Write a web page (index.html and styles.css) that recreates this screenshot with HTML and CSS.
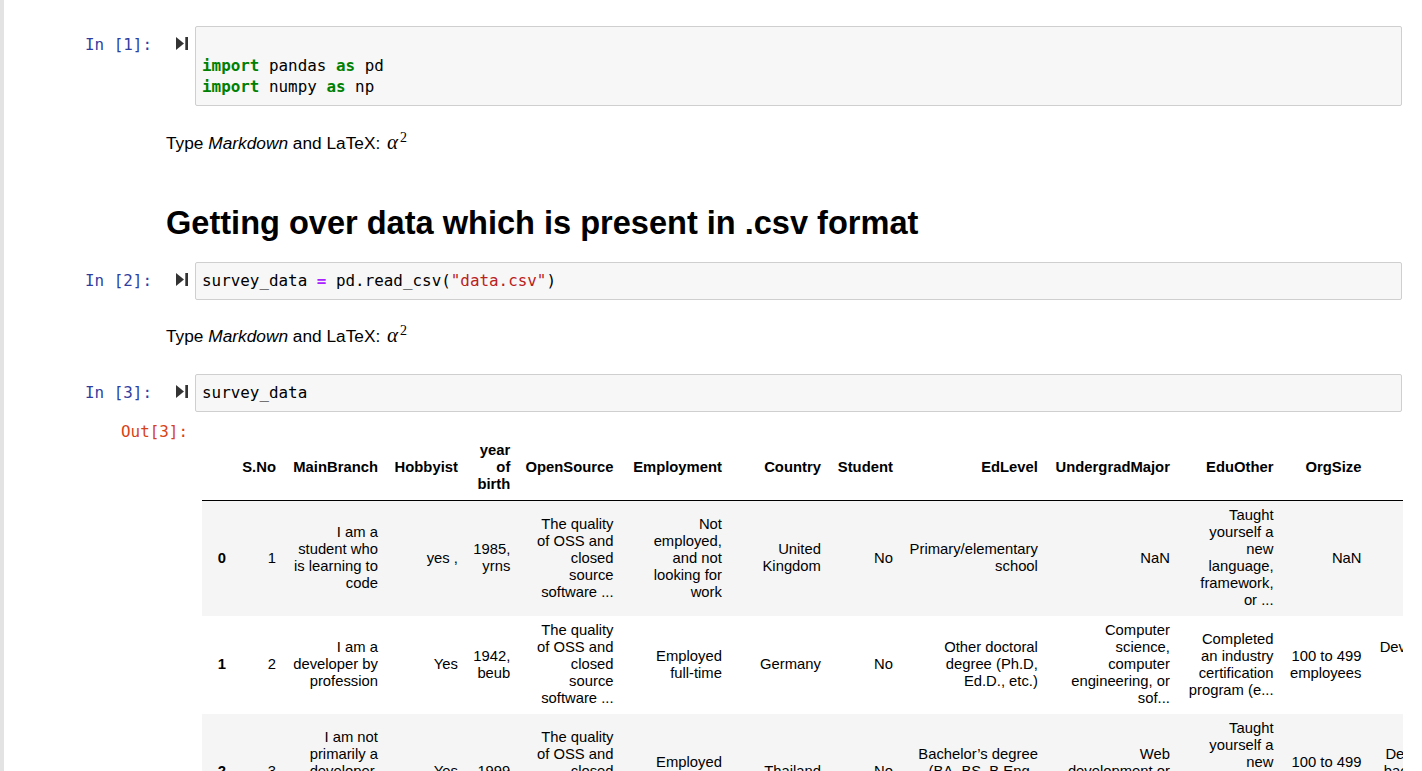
FILE: index.html
```html
<!DOCTYPE html>
<html lang="en">
<head>
<meta charset="utf-8">
<title>Notebook</title>
<link rel="stylesheet" href="styles.css">
</head>
<body>
<div class="site">
  <div class="notebook">

    <div class="code-cell cell-1">
      <div class="prompt prompt-in"><span>In [1]:</span><svg class="run" width="12" height="13" viewBox="0 0 12 13"><polygon points="0,0 8,6.5 0,13" fill="#333"/><rect x="9.3" y="0" width="2.7" height="13" fill="#333"/></svg></div>
      <div class="input-area">
        <div class="ln"></div>
        <div class="ln"><span class="kw">import</span> pandas <span class="kw">as</span> pd</div>
        <div class="ln"><span class="kw">import</span> numpy <span class="kw">as</span> np</div>
      </div>
    </div>

    <div class="md md-1">Type <em>Markdown</em> and LaTeX: <span class="math">α<sup>2</sup></span></div>

    <h1 class="md-h">Getting over data which is present in .csv format</h1>

    <div class="code-cell cell-2">
      <div class="prompt prompt-in"><span>In [2]:</span><svg class="run" width="12" height="13" viewBox="0 0 12 13"><polygon points="0,0 8,6.5 0,13" fill="#333"/><rect x="9.3" y="0" width="2.7" height="13" fill="#333"/></svg></div>
      <div class="input-area">
        <div class="ln">survey_data <span class="op">=</span> pd.read_csv(<span class="str">"data.csv"</span>)</div>
      </div>
    </div>

    <div class="md md-2">Type <em>Markdown</em> and LaTeX: <span class="math">α<sup>2</sup></span></div>

    <div class="code-cell cell-3">
      <div class="prompt prompt-in"><span>In [3]:</span><svg class="run" width="12" height="13" viewBox="0 0 12 13"><polygon points="0,0 8,6.5 0,13" fill="#333"/><rect x="9.3" y="0" width="2.7" height="13" fill="#333"/></svg></div>
      <div class="input-area">
        <div class="ln">survey_data</div>
      </div>
    </div>

    <div class="out-row">
      <div class="prompt prompt-out"><span>Out[3]:</span></div>
      <div class="output">
        <table class="df">
          <thead>
            <tr>
              <th class="w-idx"></th>
              <th class="w-sno">S.No</th>
              <th class="w-main">MainBranch</th>
              <th class="w-hob">Hobbyist</th>
              <th class="w-year">year of birth</th>
              <th class="w-open">OpenSource</th>
              <th class="w-emp">Employment</th>
              <th class="w-cty">Country</th>
              <th class="w-stu">Student</th>
              <th class="w-edl">EdLevel</th>
              <th class="w-ugm">UndergradMajor</th>
              <th class="w-edu">EduOther</th>
              <th class="w-org">OrgSize</th>
              <th class="w-dev">DevType</th>
            </tr>
          </thead>
          <tbody>
            <tr>
              <th>0</th>
              <td>1</td>
              <td>I am a student who is learning to code</td>
              <td>yes ,</td>
              <td>1985, yrns</td>
              <td>The quality of OSS and closed source software ...</td>
              <td>Not employed, and not looking for work</td>
              <td>United Kingdom</td>
              <td>No</td>
              <td>Primary/elementary school</td>
              <td>NaN</td>
              <td>Taught yourself a new language, framework, or ...</td>
              <td>NaN</td>
              <td>NaN</td>
            </tr>
            <tr>
              <th>1</th>
              <td>2</td>
              <td>I am a developer by profession</td>
              <td>Yes</td>
              <td>1942, beub</td>
              <td>The quality of OSS and closed source software ...</td>
              <td>Employed full-time</td>
              <td>Germany</td>
              <td>No</td>
              <td>Other doctoral degree (Ph.D, Ed.D., etc.)</td>
              <td>Computer science, computer engineering, or sof...</td>
              <td>Completed an industry certification program (e...</td>
              <td>100 to 499 employees</td>
              <td>Developer, desktop or enterprise applications;...</td>
            </tr>
            <tr>
              <th>2</th>
              <td>3</td>
              <td>I am not primarily a developer, but I write cod...</td>
              <td>Yes</td>
              <td>1999</td>
              <td>The quality of OSS and closed source software ...</td>
              <td>Employed full-time</td>
              <td>Thailand</td>
              <td>No</td>
              <td>Bachelor’s degree (BA, BS, B.Eng., etc.)</td>
              <td>Web development or web design</td>
              <td>Taught yourself a new language, framework, or ...</td>
              <td>100 to 499 employees</td>
              <td>Designer; Developer, back-end; Developer, front-end</td>
            </tr>
          </tbody>
        </table>
      </div>
    </div>

  </div>
</div>
</body>
</html>
```

FILE: styles.css
```css
html, body {
  margin: 0;
  height: 100%;
  overflow: hidden;
  background: #fff;
}

.site {
  height: 100%;
  overflow: hidden;
  box-sizing: border-box;
  border-left: 4px solid #e3e3e3;
}

.notebook {
  padding-top: 26px;
}

/* code cells */
.code-cell {
  display: flex;
}

.prompt {
  width: 191px;
  flex: none;
  box-sizing: border-box;
  padding-right: 7px;
  display: flex;
  justify-content: flex-end;
  align-items: flex-start;
  gap: 24px;
  font: 15.9px/21px "DejaVu Sans Mono", "Liberation Mono", monospace;
}

.prompt-in {
  color: #303F9F;
  padding-top: 8px;
}

.prompt-out {
  color: #D84315;
}

.run {
  margin-top: 3px;
  flex: none;
}

.input-area {
  flex: 1;
  min-width: 0;
  margin-right: 20px;
  background: #f7f7f7;
  border: 1px solid #cfcfcf;
  border-radius: 2px;
  padding: 7px 6px 8px;
  font: 15.9px/21px "DejaVu Sans Mono", "Liberation Mono", monospace;
  color: #000;
}

.ln {
  height: 21px;
  white-space: pre;
}

.kw {
  color: #008000;
  font-weight: bold;
}

.op {
  color: #AA22FF;
  font-weight: bold;
}

.str {
  color: #BA2121;
}

.cell-2 {
  margin-top: 19px;
}

.cell-3 {
  margin-top: 25px;
}

/* markdown */
.md {
  margin-left: 162px;
  font: 17.3px/25px "Liberation Sans", Arial, sans-serif;
  color: #000;
}

.md-1 {
  margin-top: 25px;
}

.md-2 {
  margin-top: 24px;
}

.math {
  margin-left: 2px;
  font-family: "Liberation Serif", "DejaVu Serif", serif;
  font-style: italic;
  font-size: 21px;
  line-height: 0;
}

.math sup {
  font-style: normal;
  font-size: 14px;
  line-height: 0;
  vertical-align: 7px;
  margin-left: 2px;
}

.md-h {
  margin: 48px 0 0 162px;
  font: bold 32.55px/39px "Liberation Sans", Arial, sans-serif;
  color: #000;
}

/* output */
.out-row {
  display: flex;
  margin-top: 8.7px;
}

.output {
  flex: 1;
  min-width: 0;
  overflow: hidden;
  margin-right: 19px;
  padding-left: 7px;
}

.df {
  border-collapse: collapse;
  table-layout: fixed;
  width: 1329px;
  margin-top: 15px;
  font: 14.8px/17px "Liberation Sans", Arial, sans-serif;
  color: #000;
}

.df th,
.df td {
  padding: 6.5px 7.4px;
  text-align: right;
  vertical-align: middle;
  border: none;
}

.df th {
  font-weight: bold;
}

.df thead th {
  border-bottom: 1px solid #000;
}

.df tbody tr:nth-child(odd) {
  background: #f5f5f5;
}

.w-idx { width: 16.6px; }
.w-sno { width: 35.2px; }
.w-main { width: 87.2px; }
.w-hob { width: 65.2px; }
.w-year { width: 37.6px; }
.w-open { width: 88.4px; }
.w-emp { width: 93.6px; }
.w-cty { width: 84.2px; }
.w-stu { width: 57.2px; }
.w-edl { width: 130.2px; }
.w-ugm { width: 117.2px; }
.w-edu { width: 88.8px; }
.w-org { width: 73.2px; }
.w-dev { width: 147.2px; }
```
